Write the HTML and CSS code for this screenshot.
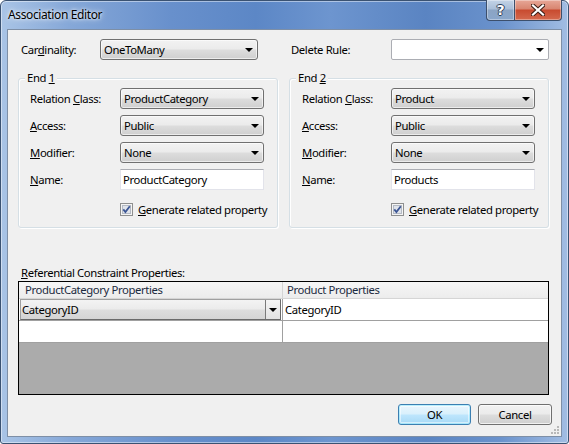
FILE: index.html
```html
<!DOCTYPE html>
<html>
<head>
<meta charset="utf-8">
<link rel="stylesheet" href="styles.css">
</head>
<body>
<div class="window">
  <div class="titlebar">
    <span class="title">Association Editor</span>
    <div class="caption-btns">
      <div class="cap-btn help"><span class="help-glyph">?</span></div>
      <div class="cap-btn close">
        <svg width="14" height="12" viewBox="0 0 14 12">
          <path d="M2 1.5 L12 10.5 M12 1.5 L2 10.5" stroke="#3b1c14" stroke-width="4.2" stroke-linecap="square"/>
          <path d="M2 1.5 L12 10.5 M12 1.5 L2 10.5" stroke="#ffffff" stroke-width="2.2" stroke-linecap="square"/>
        </svg>
      </div>
    </div>
  </div>
  <div class="client">
    <div class="cols top-row">
      <div class="col">
        <span class="lbl lbl-card">Car<u>d</u>inality:</span>
        <div class="combo combo-card"><span>OneToMany</span><i class="arrow"></i></div>
      </div>
      <div class="col">
        <span class="lbl lbl-del">Delete Rule:</span>
        <div class="combo edit combo-del"><span></span><i class="arrow"></i></div>
      </div>
    </div>

    <div class="cols groups">
      <div class="group">
        <span class="legend">End <u>1</u></span>
        <div class="frow"><span class="flbl">Relation <u>C</u>lass:</span><div class="combo fctl"><span>ProductCategory</span><i class="arrow"></i></div></div>
        <div class="frow"><span class="flbl"><u>A</u>ccess:</span><div class="combo fctl"><span>Public</span><i class="arrow"></i></div></div>
        <div class="frow"><span class="flbl"><u>M</u>odifier:</span><div class="combo fctl"><span>None</span><i class="arrow"></i></div></div>
        <div class="frow"><span class="flbl"><u>N</u>ame:</span><div class="textbox fctl"><span>ProductCategory</span></div></div>
        <div class="chkrow">
          <span class="chk"><svg width="13" height="13" viewBox="0 0 13 13"><rect x="0.5" y="0.5" width="12" height="12" fill="#f4f4f4" stroke="#8e8f8f"/><rect x="2.5" y="2.5" width="8" height="8" fill="#dfe3ea" stroke="#b4bac4"/><path d="M3.3 6.4 L5.4 9 L9.8 3.2" fill="none" stroke="#3b5594" stroke-width="1.8"/></svg></span>
          <span class="chklbl"><u>G</u>enerate related property</span>
        </div>
      </div>
      <div class="group">
        <span class="legend">End <u>2</u></span>
        <div class="frow"><span class="flbl">Relation <u>C</u>lass:</span><div class="combo fctl"><span>Product</span><i class="arrow"></i></div></div>
        <div class="frow"><span class="flbl"><u>A</u>ccess:</span><div class="combo fctl"><span>Public</span><i class="arrow"></i></div></div>
        <div class="frow"><span class="flbl"><u>M</u>odifier:</span><div class="combo fctl"><span>None</span><i class="arrow"></i></div></div>
        <div class="frow"><span class="flbl"><u>N</u>ame:</span><div class="textbox fctl"><span>Products</span></div></div>
        <div class="chkrow">
          <span class="chk"><svg width="13" height="13" viewBox="0 0 13 13"><rect x="0.5" y="0.5" width="12" height="12" fill="#f4f4f4" stroke="#8e8f8f"/><rect x="2.5" y="2.5" width="8" height="8" fill="#dfe3ea" stroke="#b4bac4"/><path d="M3.3 6.4 L5.4 9 L9.8 3.2" fill="none" stroke="#3b5594" stroke-width="1.8"/></svg></span>
          <span class="chklbl"><u>G</u>enerate related property</span>
        </div>
      </div>
    </div>

    <div class="ref-label"><u>R</u>eferential Constraint Properties:</div>
    <div class="grid">
      <div class="grow ghead">
        <div class="gcell c1">ProductCategory Properties</div>
        <div class="gcell c2">Product Properties</div>
      </div>
      <div class="grow gbody">
        <div class="gcell c1 editing">
          <div class="cell-combo"><span>CategoryID</span><span class="cell-drop"><i class="arrow"></i></span></div>
        </div>
        <div class="gcell c2">CategoryID</div>
      </div>
      <div class="grow gbody">
        <div class="gcell c1"></div>
        <div class="gcell c2"></div>
      </div>
      <div class="gfill"></div>
    </div>

    <div class="buttons">
      <div class="btn default">OK</div>
      <div class="btn">Cancel</div>
    </div>
    <svg class="grip" width="8" height="8" viewBox="0 0 8 8">
      <g fill="#b8b8b8">
        <rect x="6" y="0" width="2" height="2"/>
        <rect x="3" y="3" width="2" height="2"/><rect x="6" y="3" width="2" height="2"/>
        <rect x="0" y="6" width="2" height="2"/><rect x="3" y="6" width="2" height="2"/><rect x="6" y="6" width="2" height="2"/>
      </g>
    </svg>
  </div>
</div>
</body>
</html>
```
FILE: styles.css
```css
* { box-sizing: border-box; }
html, body { margin: 0; padding: 0; }
body {
  width: 569px;
  height: 444px;
  overflow: hidden;
  background: #ffffff;
  font-family: "Noto Sans", "DejaVu Sans", sans-serif;
  font-size: 11.3px;
  letter-spacing: -0.38px;
  color: #000;
}
u { text-decoration: underline; text-underline-offset: 1px; }

.window {
  width: 569px;
  height: 444px;
  display: flex;
  flex-direction: column;
  border: 1px solid #3a5272;
  border-radius: 6px 6px 3px 3px;
  background: linear-gradient(to right, #a9c4e6 0%, #86a8d8 12%, #6890cc 30%, #5c87c6 45%, #6d95cf 58%, #5a84c2 75%, #6a92cc 88%, #a2bde3 100%);
  box-shadow: inset 0 0 0 1px rgba(255,255,255,0.45);
}
.titlebar {
  height: 28px;
  display: flex;
  align-items: flex-start;
  justify-content: space-between;
  padding-left: 7px;
  padding-right: 6px;
}
.title {
  margin-top: 6px;
  font-size: 12px;
  line-height: 16px;
  color: #000;
  text-shadow: 0 0 6px rgba(255,255,255,0.95), 0 0 3px rgba(255,255,255,0.9);
}
.caption-btns {
  display: flex;
  margin-top: -1px;
}
.cap-btn {
  height: 21px;
  border: 1px solid #3c4f6c;
  border-top: none;
  display: flex;
  align-items: center;
  justify-content: center;
  box-shadow: inset 0 0 0 1px rgba(255,255,255,0.35);
}
.help {
  width: 28px;
  border-radius: 0 0 0 4px;
  border-right: none;
  background: linear-gradient(to bottom, #c3d3e6 0%, #a9bed8 45%, #8ba4c4 50%, #8aa7cb 100%);
}
.help-glyph {
  color: #fff;
  font-family: "DejaVu Sans", sans-serif;
  font-weight: bold;
  font-size: 14px;
  line-height: 14px;
  letter-spacing: 0;
  text-shadow: 1px 0 0 #2c3e57, -1px 0 0 #2c3e57, 0 1px 0 #2c3e57, 0 -1px 0 #2c3e57;
}
.close {
  width: 48px;
  border-radius: 0 0 4px 0;
  background: linear-gradient(to bottom, #e7a797 0%, #d88570 45%, #c84a2f 50%, #d4694e 100%);
}

.client {
  position: relative;
  margin: 0 6px;
  height: 408px;
  border: 1px solid #7e8fa6;
  background: #f0f0f0;
  padding: 9px 12px 0 10px;
  display: flex;
  flex-direction: column;
}
.cols {
  display: grid;
  grid-template-columns: 260px 260px;
  column-gap: 11px;
}
.top-row .col {
  display: flex;
  align-items: center;
  height: 21px;
}
.lbl { white-space: nowrap; }
.lbl-card { margin-left: 3px; width: 79px; }
.lbl-del { margin-left: 2px; width: 100px; }
.combo-card { width: 158px; }
.combo-del { width: 158px; }

.combo {
  position: relative;
  height: 21px;
  border: 1px solid #707070;
  border-radius: 3px;
  background: linear-gradient(to bottom, #f2f2f2 0%, #ebebeb 48%, #dddddd 52%, #cfcfcf 100%);
  display: flex;
  align-items: center;
  padding-left: 3px;
  box-shadow: inset 0 0 0 1px rgba(255,255,255,0.6);
  white-space: nowrap;
}
.combo span { line-height: 15px; }
.combo.edit {
  background: #ffffff;
  border-color: #abadb3;
  border-radius: 2px;
  box-shadow: none;
}
.arrow {
  position: absolute;
  right: 4px;
  top: 8px;
  width: 0;
  height: 0;
  border-left: 4px solid transparent;
  border-right: 4px solid transparent;
  border-top: 4px solid #000;
}
.textbox {
  height: 21px;
  background: #fff;
  border: 1px solid #e2e3ea;
  border-top-color: #abadb3;
  display: flex;
  align-items: center;
  padding-left: 2px;
  white-space: nowrap;
}

.groups { margin-top: 18px; }
.group {
  position: relative;
  height: 150px;
  border: 1px solid #d5dfe5;
  border-radius: 3px;
  box-shadow: inset 1px 1px 0 #ffffff, 1px 1px 0 #ffffff;
  padding: 9px 0 0 0;
  display: flex;
  flex-direction: column;
  gap: 6px;
}
.legend {
  position: absolute;
  left: 6px;
  top: -9px;
  padding: 0 2px;
  background: #f0f0f0;
  line-height: 16px;
}
.frow {
  display: flex;
  align-items: center;
  height: 21px;
}
.flbl { white-space: nowrap; }
.group:first-child .flbl { margin-left: 11px; width: 90px; }
.group:last-child .flbl { margin-left: 12px; width: 89px; }
.fctl { width: 144px; }
.chkrow {
  display: flex;
  align-items: center;
  margin-top: 7px;
  margin-left: 101px;
  height: 13px;
  white-space: nowrap;
}
.chk { display: block; width: 13px; height: 13px; flex: none; }
.chk svg { display: block; }
.chklbl { margin-left: 5px; line-height: 15px; }

.ref-label {
  margin-top: 37px;
  margin-left: 3px;
  line-height: 16px;
  height: 16px;
}
.grid {
  height: 114px;
  border: 1px solid #000;
  background: #ababab;
  display: flex;
  flex-direction: column;
}
.grow {
  display: grid;
  grid-template-columns: 264px 1fr;
}
.ghead {
  height: 17px;
  background: linear-gradient(to bottom, #f6f6f6, #ececec);
  border-bottom: 1px solid #d5d5d5;
  color: #1b2a3e;
}
.ghead .gcell {
  padding-left: 6px;
  line-height: 16px;
}
.ghead .c1 { border-right: 1px solid #d5d5d5; }
.ghead .c2 { padding-left: 4px; }
.gbody {
  height: 22px;
  background: #fff;
  border-bottom: 1px solid #a0a0a0;
}
.gbody .c1 { border-right: 1px solid #a0a0a0; }
.gbody .c2 { padding-left: 2px; line-height: 21px; }
.editing { padding: 0 0 0 1px; }
.cell-combo {
  position: relative;
  height: 21px;
  border: 1px solid;
  border-color: #a0a0a0 #6a6a6a #6a6a6a #a0a0a0;
  background: linear-gradient(to bottom, #f3f3f3 0%, #ebebeb 48%, #dddddd 52%, #d4d4d4 100%);
  display: flex;
  align-items: center;
  padding-left: 1px;
  margin-right: 1px;
}
.cell-drop {
  position: absolute;
  right: 0;
  top: 0;
  width: 15px;
  height: 19px;
  border-left: 1px solid #7a7a7a;
  background: linear-gradient(to bottom, #f5f5f5, #e2e2e2);
}
.cell-drop .arrow { right: 3px; top: 8px; }
.gfill { flex: 1; }

.buttons {
  margin-top: 9px;
  display: flex;
  justify-content: flex-end;
  gap: 7px;
  margin-right: -3px;
}
.btn {
  width: 74px;
  height: 21px;
  border: 1px solid #707070;
  border-radius: 3px;
  background: linear-gradient(to bottom, #f2f2f2 0%, #ebebeb 48%, #dddddd 52%, #cfcfcf 100%);
  box-shadow: inset 0 0 0 1px rgba(255,255,255,0.7);
  display: flex;
  align-items: center;
  justify-content: center;
  line-height: 15px;
}
.btn.default {
  width: 73px;
  border-color: #3c7fb1;
  background: linear-gradient(to bottom, #eaf6fd 0%, #d9f0fc 48%, #bee6fd 52%, #a7d9f5 100%);
  box-shadow: inset 0 0 0 1px #48d8fb55, inset 0 0 0 2px rgba(255,255,255,0.5);
}
.grip {
  position: absolute;
  right: 2px;
  bottom: 2px;
}
```
